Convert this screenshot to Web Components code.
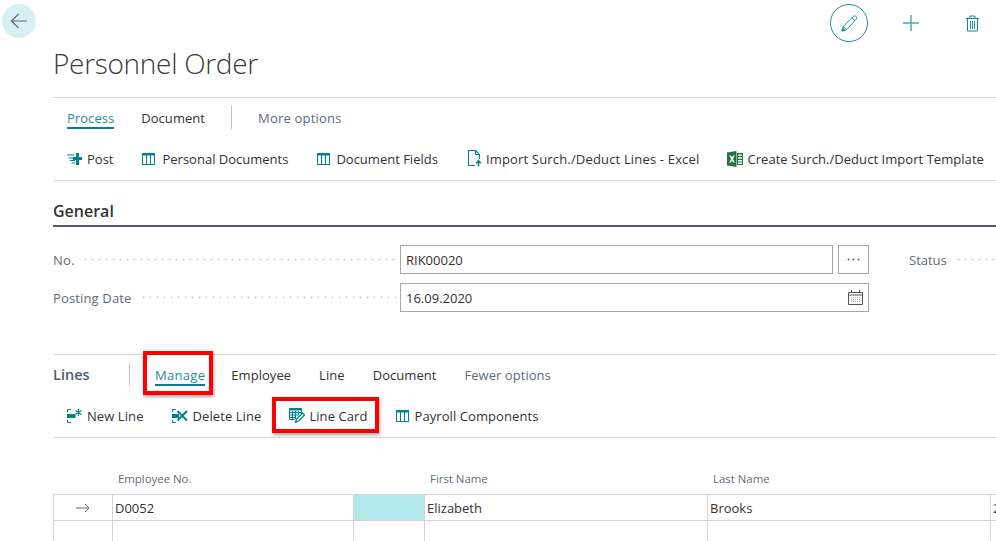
<!DOCTYPE html>
<html lang="en">
<head>
<meta charset="utf-8">
<title>Personnel Order</title>
<style>
  html, body { margin: 0; background: #fff; overflow: hidden; }
  body { width: 996px; height: 541px; font: 13px "Open Sans", "Noto Sans", sans-serif; color: #333; }
</style>
</head>
<body>

<bc-page>
  <bc-topbar></bc-topbar>
  <bc-content>
    <bc-title>Personnel Order</bc-title>

    <bc-tabs>
      <bc-tab active>Process</bc-tab>
      <bc-tab>Document</bc-tab>
      <bc-sep></bc-sep>
      <bc-tab muted style="letter-spacing:.2px">More options</bc-tab>
    </bc-tabs>
    <bc-actions divider>
      <bc-action icon="post">Post</bc-action>
      <bc-action icon="table" style="--g:7px">Personal Documents</bc-action>
      <bc-action icon="table" style="--g:6px">Document Fields</bc-action>
      <bc-action icon="import" style="--g:4px;letter-spacing:.17px">Import Surch./Deduct Lines - Excel</bc-action>
      <bc-action icon="excel" style="--g:4px;margin-left:-1px;letter-spacing:.05px">Create Surch./Deduct Import Template</bc-action>
    </bc-actions>

    <bc-section>General</bc-section>
    <bc-fields>
      <bc-field label="No." value="RIK00020" kind="more"></bc-field>
      <bc-field label="Posting Date" value="16.09.2020" kind="date"></bc-field>
    </bc-fields>

    <bc-lines>
      <bc-tabs lines>
        <span slot="lead">Lines</span>
        <bc-tab active style="letter-spacing:.3px;margin-right:26px">Manage</bc-tab>
        <bc-tab>Employee</bc-tab>
        <bc-tab>Line</bc-tab>
        <bc-tab>Document</bc-tab>
        <bc-tab muted>Fewer options</bc-tab>
      </bc-tabs>
      <bc-actions lines divider>
        <bc-action icon="newline">New Line</bc-action>
        <bc-action icon="delline">Delete Line</bc-action>
        <bc-action icon="linecard" style="--g:4px">Line Card</bc-action>
        <bc-action icon="table" style="--g:6px">Payroll Components</bc-action>
      </bc-actions>
      <bc-callout style="left:90px;top:-3px;width:62px;height:36px"></bc-callout>
      <bc-callout style="left:219px;top:43px;width:99px;height:28px"></bc-callout>
    </bc-lines>

    <bc-grid></bc-grid>
  </bc-content>
</bc-page>

<script>
'use strict'

const TEAL = '#00838a'

const ICONS = {
  post: `<svg width="15" height="12" viewBox="0 0 15 12"><g fill="${TEAL}"><path d="M6 4h3V0h3v4h3v3h-3v5H9V7H6z"/><path d="M0 1.500h7v1H0zM1.500 4.500H6v1H1.500zM3 7h5v1H3zM4.500 9.500H8v1H4.500z"/></g></svg>`,
  table: `<svg width="13" height="12" viewBox="0 0 13 12" fill="none" stroke="${TEAL}"><rect x=".5" y=".5" width="12" height="11"/><path d="M0 1.500h13" stroke-width="2"/><path d="M4.500 2v10M8.500 2v10"/></svg>`,
  import: `<svg width="15" height="17" viewBox="0 0 15 17" fill="none" stroke="${TEAL}"><path d="M8 15.500H1.500V.5h7l4 4V9M8.500.5v4h4" stroke-width="1.100"/><path d="M11.500 16.500v-5M9.200 13.200l2.300-2.500 2.300 2.500" stroke-width="1.600"/></svg>`,
  excel: `<svg width="16" height="16" viewBox="0 0 16 16"><path fill="#217346" d="M0 1.500 9.500 0v16L0 14.500z"/><path fill="#217346" d="M10 2h6v12h-6z"/><path fill="#fff" d="M11 3.500h4v1.600h-4zM11 6.200h4v1.600h-4zM11 8.900h4v1.600h-4zM11 11.500h4v1.400h-4z"/><path fill="#fff" d="M2.300 4.500h1.700l1 2.100 1.100-2.100h1.600L6 8l1.800 3.500H6.100L5 9.300l-1.100 2.200H2.300L4.100 8z"/></svg>`,
  newline: `<svg width="15" height="14" viewBox="0 0 15 14" fill="none" stroke="${TEAL}"><path d="M.5 3V.5h3.500M.5 11v2.500h3.500"/><path fill="${TEAL}" stroke="none" d="M0 5h8.500v4H0z"/><path d="M11.500 0v7M8.500 1.500l6 4M14.500 1.500l-6 4" stroke-width="1.100"/></svg>`,
  delline: `<svg width="16" height="14" viewBox="0 0 16 14" fill="none" stroke="${TEAL}"><path d="M.5 3V.5h3.500M.5 11v2.500h3.500"/><path fill="${TEAL}" stroke="none" d="M0 5h7v4H0z"/><path d="M5.500 2l9.500 9.500M15 2l-9.500 9.500" stroke-width="2"/></svg>`,
  linecard: `<svg width="16" height="15" viewBox="0 0 16 15" fill="none" stroke="${TEAL}"><path d="M.5 11.500V.5h12v5"/><path d="M0 1.500h13" stroke-width="2"/><path d="M3.500 3v8.500M6.500 3v8M9.500 3v4M.5 4.500h12M.5 7h9M.5 9.500h6.500M.5 11.500h5" stroke-width="1"/><path d="M6.500 14.500l1-3.500 6-6 2 2-6 6z" fill="#fff" stroke-width="1.300"/></svg>`
}

// shorthand: class with its markup and css in an open shadow root
const define = (name, css, html = '<slot></slot>') => {
  customElements.define(name, class extends HTMLElement {
    constructor() {
      super()
      const root = this.attachShadow({mode: 'open'})
      const tpl = document.createElement('template')
      tpl.innerHTML = `<style>${css}</style>${typeof html === 'function' ? html(this) : html}`
      root.appendChild(tpl.content.cloneNode(true))
    }
  })
}

define('bc-page', `:host { display: block; width: 996px; height: 541px; overflow: hidden; }`)

define('bc-content', `:host { display: block; margin-left: 53px; margin-top: 3px; }`)

define('bc-topbar', `
  :host { display: flex; align-items: flex-start; justify-content: space-between; padding: 4px 17px 0 2px; height: 38px; }
  .back { width: 34px; height: 34px; border-radius: 50%; background: #d8eff3; display: flex; align-items: center; justify-content: center; }
  .right { display: flex; align-items: center; height: 38px; }
  .edit { width: 36px; height: 36px; border: 1px solid #1a8f97; border-radius: 50%; display: flex; align-items: center; justify-content: center; }
  .add { display: flex; margin-left: 35px; }
  .del { display: flex; margin-left: 47px; }
`, `
  <div class="back">
    <svg width="18" height="16" viewBox="0 0 18 16" fill="none" stroke="#5f6b73" stroke-width="1.200"><path d="M17 8H1.500M8.500 1L1.500 8l7 7"/></svg>
  </div>
  <div class="right">
    <div class="edit">
      <svg width="17" height="17" viewBox="0 0 17 17" fill="none" stroke="#1f939b" stroke-width="1"><path d="M1 16l1.200-4.500L12.500 1.200a1.500 1.500 0 0 1 2.200 0l.6.6a1.500 1.500 0 0 1 0 2.200L5.500 14.800z"/><path d="M2.200 11.500l3.300 3.300M11 2.800l3 3"/><path d="M1 16l.8-3 2.200 2.200z" fill="#1f939b"/></svg>
    </div>
    <div class="add">
      <svg width="16" height="16" viewBox="0 0 16 16" stroke="#4fa9af" stroke-width="1.500"><path d="M8 0v16M0 8h16"/></svg>
    </div>
    <div class="del">
      <svg width="13" height="17" viewBox="0 0 13 17" fill="none" stroke="#14868e"><path d="M0 3.500h13M4 3V1h5v2"/><path d="M1.500 3.500v12.500h10V3.500"/><path d="M4.500 6v8M6.500 6v8M8.500 6v8" stroke-width=".9"/></svg>
    </div>
  </div>
`)

define('bc-title', `
  :host { display: block; font-weight: 300; font-size: 28px; line-height: 36px; height: 52px; border-bottom: 1px solid #d6d6d6; color: #3a3a3a; letter-spacing: -.3px; }
`)

define('bc-tabs', `
  :host { display: flex; align-items: center; height: 41px; padding: 0 0 2px 14px; box-sizing: border-box; letter-spacing: .05px; }
  :host([lines]) { padding-left: 0; border-top: 1px solid #d9d9d9; height: 42px; --tab-gap: 28px; }
  ::slotted([slot=lead]) { font-weight: 600; color: #505c6d; font-size: 14.5px; line-height: 20px; width: 76px; flex: none; letter-spacing: 0; }
  .bar { display: none; }
  :host([lines]) .bar { display: block; width: 1px; height: 23px; background: #c8c8c8; margin-right: 25px; }
  .items { display: flex; align-items: center; }
`, `<slot name="lead"></slot><div class="bar"></div><div class="items"><slot></slot></div>`)

define('bc-tab', `
  :host { display: block; position: relative; margin-right: var(--tab-gap, 27px); color: #333; line-height: 20px; white-space: nowrap; }
  :host([active]) { color: #1a8f97; }
  :host([active])::after { content: ""; position: absolute; left: 0; right: 0; bottom: -1px; height: 2px; background: ${TEAL}; }
  :host([muted]) { color: #5f6b7e; }
`)

define('bc-sep', `
  :host { display: block; width: 1px; height: 23px; background: #c0c0c8; margin: 0 26px 0 -1px; }
`)

define('bc-actions', `
  :host { display: flex; align-items: center; height: 41px; padding: 0 0 2px 14px; box-sizing: border-box; gap: 29px; white-space: nowrap; }
  :host([divider]) { border-bottom: 1px solid #d9d9d9; height: 42px; }
  :host([lines]) { gap: 28px; letter-spacing: .08px; }
`)

define('bc-action', `
  :host { display: flex; align-items: center; gap: var(--g, 5px); flex: none; color: #333; }
  .ic { display: flex; }
`, el => `<span class="ic">${ICONS[el.getAttribute('icon')]}</span><slot></slot>`)

define('bc-section', `
  :host { display: block; margin-top: 18px; height: 26px; line-height: 25px; font-size: 16px; font-weight: 600; color: #333; border-bottom: 2px solid #505c6d; }
`)

define('bc-fields', `
  :host { display: flex; flex-direction: column; gap: 9px; margin-top: 18px; margin-bottom: 42px; }
`)

define('bc-field', `
  :host { display: grid; grid-template-columns: 347px 433px 5px 31px 40px auto; align-items: center; height: 29px; }
  .lab { display: flex; align-items: center; color: #5f6b7e; gap: 8px; padding-right: 2px; min-width: 0; letter-spacing: .15px; }
  .lead { flex: 1; height: 3px; background: radial-gradient(circle, #c8cbd0 .9px, transparent 1.100px) 0 0 / 7px 3px repeat-x; }
  .box { border: 1px solid #a6a6a6; height: 27px; padding: 0 5px; display: flex; align-items: center; justify-content: space-between; color: #333; box-sizing: content-box; }
  .more { grid-column: 4; height: 27px; border: 1px solid #a6a6a6; display: flex; align-items: center; justify-content: center; }
  .status { grid-column: 6; display: flex; align-items: center; gap: 8px; color: #5f6b7e; width: 100px; }
  :host([kind=date]) .box { grid-column: 2 / span 3; }
`, el => {
  const date = el.getAttribute('kind') === 'date'
  return `
    <div class="lab">${el.getAttribute('label')}<span class="lead"></span></div>
    <div class="box">${el.getAttribute('value')}${date ? `
      <svg width="15" height="15" viewBox="0 0 15 15" fill="none" stroke="#555"><path d="M.5 2.500h14v12H.5zM.5 5h14M3.500 0v2M11.500 0v2"/><path d="M3 7.500h9M3 9.500h9M3 11.500h9" stroke="#aaa" stroke-dasharray="1 1"/></svg>` : ''}</div>
    ${date ? '' : `
    <div class="more"><svg width="13" height="3" viewBox="0 0 13 3"><g fill="#3f6f5a"><circle cx="1.500" cy="1.500" r="1"/><circle cx="6.500" cy="1.500" r="1"/><circle cx="11.500" cy="1.500" r="1"/></g></svg></div>
    <div class="status">Status<span class="lead"></span></div>`}`
})

define('bc-lines', `:host { display: block; position: relative; }`)

// red marker drawn over the screenshot, so it sits on top of the tabs and buttons
define('bc-callout', `
  :host { display: block; position: absolute; border: 4px solid #f00; box-shadow: 1px 2px 3px rgba(0,0,0,.35); pointer-events: none; }
`, '')

define('bc-grid', `
  :host { display: grid; grid-template-columns: 59px 241px 71px 283px 283px 60px; grid-template-rows: 26px 27px 26px; margin-top: 30px; font-size: 13px; }
  .h { color: #5f6b7e; font-size: 11.400px; line-height: 22px; padding-left: 6px; }
  .c { border-left: 1px solid #d5d5dd; border-bottom: 1px solid #d5d5dd; display: flex; align-items: center; padding-left: 2px; min-width: 0; box-sizing: border-box; }
  .top { border-top: 1px solid #d5d5dd; }
  .pick { background: #b2e8ec; }
  .arrow { justify-content: center; padding: 0; }
`, `
  <div class="h"></div><div class="h">Employee No.</div><div class="h"></div><div class="h">First Name</div><div class="h">Last Name</div><div class="h"></div>
  <div class="c top arrow"><svg width="14" height="10" viewBox="0 0 14 10" fill="none" stroke="#5f6b73"><path d="M0 5h13M9 1l4 4-4 4"/></svg></div>
  <div class="c top">D0052</div><div class="c top pick"></div><div class="c top">Elizabeth</div><div class="c top">Brooks</div><div class="c top">2</div>
  <div class="c"></div><div class="c"></div><div class="c"></div><div class="c"></div><div class="c"></div><div class="c"></div>
`)
</script>
</body>
</html>
